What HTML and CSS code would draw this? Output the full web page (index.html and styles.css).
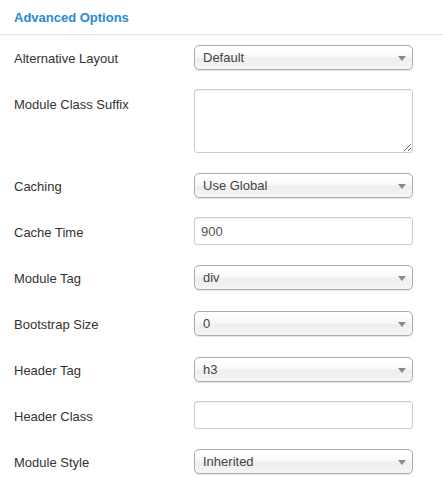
FILE: index.html
```html
<!DOCTYPE html>
<html lang="en">
<head>
    <meta charset="UTF-8">
    <title>Advanced Options</title>
    <link rel="stylesheet" href="styles.css">
</head>
<body>
    <div class="panel">
        <h3 class="panel-title">Advanced Options</h3>
        <div class="form">
            <div class="row">
                <label>Alternative Layout</label>
                <div class="controls"><div class="select">Default<span class="arrow"></span></div></div>
            </div>
            <div class="row">
                <label>Module Class Suffix</label>
                <div class="controls"><textarea class="area"></textarea></div>
            </div>
            <div class="row">
                <label>Caching</label>
                <div class="controls"><div class="select">Use Global<span class="arrow"></span></div></div>
            </div>
            <div class="row">
                <label>Cache Time</label>
                <div class="controls"><input class="text" type="text" value="900"></div>
            </div>
            <div class="row">
                <label>Module Tag</label>
                <div class="controls"><div class="select">div<span class="arrow"></span></div></div>
            </div>
            <div class="row">
                <label>Bootstrap Size</label>
                <div class="controls"><div class="select">0<span class="arrow"></span></div></div>
            </div>
            <div class="row">
                <label>Header Tag</label>
                <div class="controls"><div class="select">h3<span class="arrow"></span></div></div>
            </div>
            <div class="row">
                <label>Header Class</label>
                <div class="controls"><input class="text" type="text" value=""></div>
            </div>
            <div class="row">
                <label>Module Style</label>
                <div class="controls"><div class="select">Inherited<span class="arrow"></span></div></div>
            </div>
        </div>
    </div>
</body>
</html>
```

FILE: styles.css
```css
body {
    margin: 0;
    background: #fff;
    font-family: "Liberation Sans", Arial, sans-serif;
    font-size: 13px;
    color: #333;
}

.panel-title {
    margin: 0;
    padding: 9px 14px 7px;
    height: 18px;
    line-height: 18px;
    font-size: 13px;
    font-weight: bold;
    color: #2a8ad4;
    border-bottom: 1px solid #e3e3e3;
}

.form {
    padding: 8px 30px 0 14px;
}

.row {
    display: flex;
    align-items: flex-start;
    margin-bottom: 18px;
}

.row label {
    width: 180px;
    padding-top: 7px;
    line-height: 18px;
}

.controls {
    width: 219px;
    min-height: 28px;
    display: flex;
    align-items: center;
}

.select {
    position: relative;
    box-sizing: border-box;
    width: 100%;
    height: 25px;
    line-height: 23px;
    padding-left: 8px;
    color: #444;
    border: 1px solid #aaa;
    border-radius: 5px;
    background: linear-gradient(#fff 20%, #f6f6f6 50%, #eee 52%, #f4f4f4 100%);
    box-shadow: inset 0 0 3px #fff, 0 1px 1px rgba(0, 0, 0, 0.1);
}

.arrow {
    position: absolute;
    right: 6px;
    top: 10px;
    width: 0;
    height: 0;
    border-left: 4px solid transparent;
    border-right: 4px solid transparent;
    border-top: 5px solid #888;
}

.text,
.area {
    box-sizing: border-box;
    width: 100%;
    margin: 0;
    border: 1px solid #ccc;
    border-radius: 3px;
    font-family: "Liberation Sans", Arial, sans-serif;
    font-size: 13px;
    color: #555;
    background: #fff;
    box-shadow: inset 0 1px 1px rgba(0, 0, 0, 0.05);
}

.text {
    height: 28px;
    padding: 4px 6px;
}

.area {
    height: 64px;
    resize: both;
    padding: 4px 6px;
}
```
